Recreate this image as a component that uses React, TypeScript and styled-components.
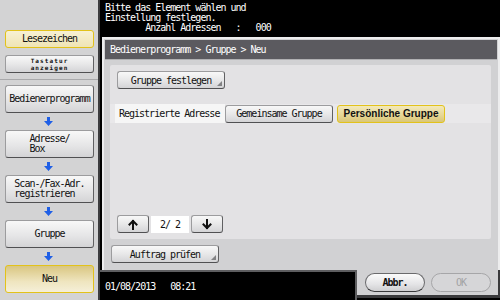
import React, { FC } from "react"
import styled, { createGlobalStyle, css } from "styled-components"

const GlobalStyle = createGlobalStyle`
    html, body {
        margin: 0;
        padding: 0;
        background: #000;
    }
    * {
        box-sizing: border-box;
    }
`

const MONO = `"DejaVu Sans Mono", "Liberation Mono", monospace`

const Screen = styled.div`
    width: 500px;
    height: 300px;
    display: flex;
    overflow: hidden;
    font-family: ${MONO};
    font-size: 10px;
    letter-spacing: -1px;
    color: #111;
`

const Sidebar = styled.div`
    width: 100px;
    flex: none;
    background: #d3d3d4;
    border-right: 2px solid #3c3c3e;
    display: flex;
    flex-direction: column;
    padding-top: 30px;
`

const Separator = styled.div`
    height: 1px;
    background: #a9a9ab;
    margin: 6px 0 5px;
`

const buttonFace = css<{ $yellow?: boolean }>`
    border-radius: 3px;
    border: 1px solid #9c9c9e;
    border-right-color: #606062;
    border-bottom-color: #505052;
    background: linear-gradient(#f8f8f8, #e6e6e7 55%, #d4d4d6);
    ${(p) => p.$yellow && css`
        border: 1.5px solid #e2c21a;
        background: linear-gradient(#f7f1d4, #efe4b4);
    `}
`

const SideButton = styled.div<{ $yellow?: boolean; $h?: number; $small?: boolean }>`
    ${buttonFace};
    margin-left: 5px;
    width: 89px;
    height: ${(p) => p.$h ?? 28}px;
    display: flex;
    align-items: center;
    justify-content: center;
    line-height: 10px;
    ${(p) => p.$small && css`
        font-size: 6px;
        line-height: 7px;
        letter-spacing: 1.1px;
        text-align: center;
        font-weight: bold;
    `}
`

const NeuButton = styled(SideButton)`
    background: linear-gradient(#d9c681, #efe5bf 60%, #f5efd8);
`

const Lines = styled.span`
    text-align: left;
`

const FlowArrow = styled.div`
    height: 17px;
    display: flex;
    align-items: center;
    justify-content: center;
    padding-right: 2px;
`

const Main = styled.div`
    flex: 1;
    display: flex;
    flex-direction: column;
    background: #000;
`

const Message = styled.div`
    height: 37px;
    padding: 3px 5px 0;
    color: #fff;
    white-space: pre;
    line-height: 10px;
`

const Panel = styled.div`
    flex: 1;
    margin-left: 2px;
    border-top: 2px solid #ededee;
    border-left: 2px solid #ededee;
    border-right: 2px solid #ededee;
    background: #d1d1d3;
    display: flex;
    flex-direction: column;
    padding: 1px 1px 0 1px;
`

const Header = styled.div`
    height: 20px;
    background: #5b5a5f;
    color: #fff;
    display: flex;
    align-items: center;
    padding-left: 5px;
    border-bottom: 1px solid #b0b0b2;
`

const Content = styled.div`
    margin: 5px 6px 0 5px;
    height: 174px;
    background: #e3e2e4;
    border-radius: 2px;
    display: flex;
    flex-direction: column;
    padding: 6px 7px 6px 7px;
`

const ToolButton = styled.div<{ $w: number; $yellow?: boolean }>`
    ${buttonFace};
    position: relative;
    width: ${(p) => p.$w}px;
    height: 18px;
    display: flex;
    align-items: center;
    justify-content: center;
`

const Corner = styled.span`
    position: absolute;
    right: 2px;
    bottom: 2px;
    width: 0;
    height: 0;
    border-left: 5px solid transparent;
    border-bottom: 5px solid #828284;
`

const TabRow = styled.div`
    margin: 15px -7px 0;
    padding: 0 0 0 5px;
    height: 19px;
    display: flex;
    align-items: center;
    gap: 4px;
    background: #e9e8ea;
`

const TabLabel = styled.div`
    height: 19px;
    width: 110px;
    background: #f6f6f6;
    display: flex;
    align-items: center;
    padding-left: 4px;
    margin-right: -4px;
`

const Personal = styled(ToolButton)`
    font-family: "Liberation Sans", Arial, sans-serif;
    font-weight: bold;
    font-size: 10px;
    letter-spacing: 0;
    background: linear-gradient(#f3e9b9, #e6d694 60%, #d9c676);
`

const Pager = styled.div`
    margin-top: auto;
    display: flex;
    align-items: center;
    gap: 2px;
`

const ArrowButton = styled.div`
    ${buttonFace};
    width: 32px;
    height: 18px;
    display: flex;
    align-items: center;
    justify-content: center;
`

const PageBox = styled.div`
    width: 38px;
    height: 17px;
    background: #fff;
    display: flex;
    align-items: center;
    justify-content: center;
    white-space: pre;
`

const BottomRow = styled.div`
    padding: 6px 0 0 6px;
`

const Footer = styled.div`
    height: 30px;
    display: flex;
`

const Status = styled.div`
    width: 257px;
    border-top: 2px solid #5e5e60;
    border-right: 2px solid #5e5e60;
    background: #000;
    color: #fff;
    display: flex;
    align-items: center;
    gap: 15px;
    padding: 0 0 0 5px;
`

const Actions = styled.div`
    flex: 1;
    background: #d1d1d3;
    border-right: 2px solid #3a3a3c;
    border-bottom: 3px solid #3a3a3c;
    margin-bottom: 2px;
    display: flex;
    align-items: center;
    gap: 6px;
    padding: 0 0 0 8px;
`

const Pill = styled.div<{ $disabled?: boolean }>`
    width: 60px;
    height: 19px;
    border-radius: 10px;
    border: 1px solid #6a6a6c;
    border-bottom-color: #3a3a3c;
    background: linear-gradient(#fbfbfb, #e4e4e6 60%, #cfcfd1);
    display: flex;
    align-items: center;
    justify-content: center;
    font-weight: bold;
    ${(p) => p.$disabled && css`
        border-color: #a6a6a8;
        background: #d6d6d8;
        color: #a3a3a5;
        font-weight: normal;
    `}
`

const BlueArrow: FC = () => (
    <svg width="9" height="9" viewBox="0 0 9 9">
        <polygon points="3,0 6,0 6,4 9,4 4.5,9 0,4 3,4" fill="#1f5fe6" />
    </svg>
)

const PageArrow: FC<{ up?: boolean }> = ({ up }) => (
    <svg width="10" height="11" viewBox="0 0 10 11">
        <g stroke="#111" strokeWidth="2" fill="none" strokeLinecap="square" transform={up ? "" : "rotate(180 5 5.5)"}>
            <path d="M5 2 V10" />
            <path d="M1.5 5.5 L5 2 L8.5 5.5" />
        </g>
    </svg>
)

const App: FC = () => (
    <>
        <GlobalStyle />
        <Screen>
            <Sidebar>
                <SideButton $yellow $h={18}>Lesezeichen</SideButton>
                <SideButton $h={18} $small style={{ marginTop: 7 }}>
                    Tastatur<br />anzeigen
                </SideButton>
                <Separator />
                <SideButton>Bedienerprogramm</SideButton>
                <FlowArrow><BlueArrow /></FlowArrow>
                <SideButton><Lines>Adresse/<br />Box</Lines></SideButton>
                <FlowArrow><BlueArrow /></FlowArrow>
                <SideButton><Lines>Scan-/Fax-Adr.<br />registrieren</Lines></SideButton>
                <FlowArrow><BlueArrow /></FlowArrow>
                <SideButton>Gruppe</SideButton>
                <FlowArrow><BlueArrow /></FlowArrow>
                <NeuButton $yellow>Neu</NeuButton>
            </Sidebar>
            <Main>
                <Message>
                    {"Bitte das Element wählen und\nEinstellung festlegen.\n        Anzahl Adressen   :   000"}
                </Message>
                <Panel>
                    <Header>Bedienerprogramm &gt; Gruppe &gt; Neu</Header>
                    <Content>
                        <ToolButton $w={108}>
                            Gruppe festlegen
                            <Corner />
                        </ToolButton>
                        <TabRow>
                            <TabLabel>Registrierte Adresse</TabLabel>
                            <ToolButton $w={108}>Gemeinsame Gruppe</ToolButton>
                            <Personal $w={108} $yellow>Persönliche Gruppe</Personal>
                        </TabRow>
                        <Pager>
                            <ArrowButton><PageArrow up /></ArrowButton>
                            <PageBox>{"2/ 2"}</PageBox>
                            <ArrowButton><PageArrow /></ArrowButton>
                        </Pager>
                    </Content>
                    <BottomRow>
                        <ToolButton $w={108}>
                            Auftrag prüfen
                            <Corner />
                        </ToolButton>
                    </BottomRow>
                </Panel>
                <Footer>
                    <Status>
                        <span>01/08/2013</span>
                        <span>08:21</span>
                    </Status>
                    <Actions>
                        <Pill>Abbr.</Pill>
                        <Pill $disabled>OK</Pill>
                    </Actions>
                </Footer>
            </Main>
        </Screen>
    </>
)

export default App
